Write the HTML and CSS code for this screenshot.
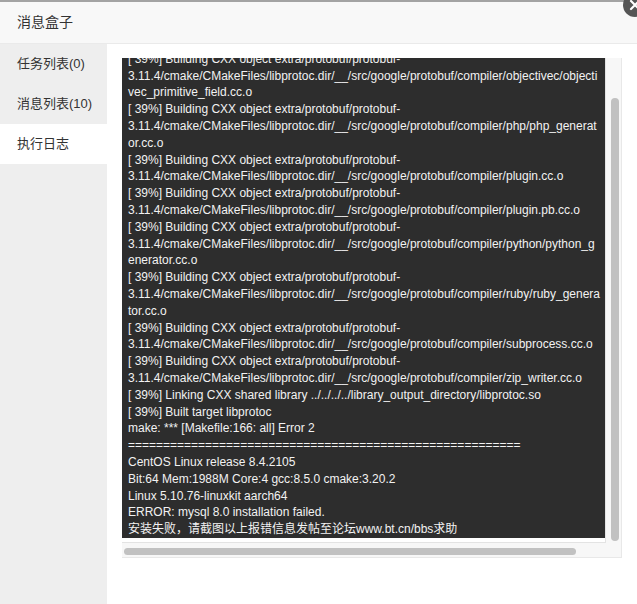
FILE: index.html
```html
<!DOCTYPE html>
<html lang="zh-CN">
<head>
    <meta charset="UTF-8">
    <meta name="viewport" content="width=device-width, initial-scale=1.0">
    <title>消息盒子</title>
    <link rel="stylesheet" href="styles.css">
</head>
<body>
    <div class="dialog">
        <div class="header">
            <span class="title">消息盒子</span>
            <a class="close-btn" href="#">
                <svg width="24" height="24" viewBox="0 0 24 24">
                    <circle cx="12" cy="12" r="12" fill="#555"/>
                    <path d="M8 8 L16 16 M16 8 L8 16" stroke="#fff" stroke-width="2.2" stroke-linecap="round"/>
                </svg>
            </a>
        </div>

        <div class="main">
            <div class="sidebar">
                <div class="tab">任务列表(0)</div>
                <div class="tab">消息列表(10)</div>
                <div class="tab active">执行日志</div>
            </div>

            <div class="content">
                <div class="log-box">
                    <div class="log-view">
<pre class="log-pre">[ 39%] Building CXX object extra/protobuf/protobuf-
3.11.4/cmake/CMakeFiles/libprotoc.dir/__/src/google/protobuf/compiler/objectivec/objecti
vec_primitive_field.cc.o
[ 39%] Building CXX object extra/protobuf/protobuf-
3.11.4/cmake/CMakeFiles/libprotoc.dir/__/src/google/protobuf/compiler/php/php_generat
or.cc.o
[ 39%] Building CXX object extra/protobuf/protobuf-
3.11.4/cmake/CMakeFiles/libprotoc.dir/__/src/google/protobuf/compiler/plugin.cc.o
[ 39%] Building CXX object extra/protobuf/protobuf-
3.11.4/cmake/CMakeFiles/libprotoc.dir/__/src/google/protobuf/compiler/plugin.pb.cc.o
[ 39%] Building CXX object extra/protobuf/protobuf-
3.11.4/cmake/CMakeFiles/libprotoc.dir/__/src/google/protobuf/compiler/python/python_g
enerator.cc.o
[ 39%] Building CXX object extra/protobuf/protobuf-
3.11.4/cmake/CMakeFiles/libprotoc.dir/__/src/google/protobuf/compiler/ruby/ruby_genera
tor.cc.o
[ 39%] Building CXX object extra/protobuf/protobuf-
3.11.4/cmake/CMakeFiles/libprotoc.dir/__/src/google/protobuf/compiler/subprocess.cc.o
[ 39%] Building CXX object extra/protobuf/protobuf-
3.11.4/cmake/CMakeFiles/libprotoc.dir/__/src/google/protobuf/compiler/zip_writer.cc.o
[ 39%] Linking CXX shared library ../../../../library_output_directory/libprotoc.so
[ 39%] Built target libprotoc
make: *** [Makefile:166: all] Error 2
========================================================
CentOS Linux release 8.4.2105
Bit:64 Mem:1988M Core:4 gcc:8.5.0 cmake:3.20.2
Linux 5.10.76-linuxkit aarch64
ERROR: mysql 8.0 installation failed.
安装失败，请截图以上报错信息发帖至论坛www.bt.cn/bbs求助</pre>
                    </div>
                    <div class="vtrack"><div class="vthumb"></div></div>
                    <div class="htrack"><div class="hthumb"></div></div>
                    <div class="corner"></div>
                </div>
            </div>
        </div>
    </div>
</body>
</html>
```

FILE: styles.css
```css
body {
    margin: 0;
    font-family: "Liberation Sans", Arial, "Noto Sans CJK SC", sans-serif;
    color: #333;
    background-color: #fff;
}
.dialog {
    height: 100vh;
    display: flex;
    flex-direction: column;
    border-top: 2px solid #a3a3a3;
    box-sizing: border-box;
    position: relative;
}
.header {
    height: 41px;
    line-height: 40px;
    padding-left: 17px;
    background-color: #f8f8f8;
    border-bottom: 1px solid #eaeaea;
    flex-shrink: 0;
}
.title {
    font-size: 14px;
    color: #333;
}
.close-btn {
    position: absolute;
    top: -9px;
    right: -10px;
    width: 24px;
    height: 24px;
    line-height: 0;
}
.main {
    flex: 1;
    display: flex;
}
.sidebar {
    width: 107px;
    background-color: #eeeeee;
    flex-shrink: 0;
}
.tab {
    height: 40px;
    line-height: 40px;
    padding-left: 17px;
    font-size: 13px;
    color: #333;
}
.tab.active {
    background-color: #fff;
}
.content {
    flex: 1;
    padding: 14px 15px 15px 15px;
}
.log-box {
    display: grid;
    grid-template-columns: 484px 16px;
    grid-template-rows: 485px 15px;
    width: 500px;
    height: 500px;
}
.log-view {
    overflow: hidden;
    background-color: #fff;
    border-right: 1px solid #e3e3e3;
    border-bottom: 1px solid #e3e3e3;
    padding-bottom: 4px;
    box-sizing: border-box;
    display: flex;
}
.log-pre {
    margin: 0;
    flex: 1;
    background-color: #2d2d2d;
    color: #f2f2f2;
    font-family: "Liberation Sans", Arial, "Noto Sans CJK SC", sans-serif;
    font-size: 12px;
    line-height: 16.8px;
    padding: 0 6px;
    white-space: pre;
    overflow: hidden;
    display: flex;
    flex-direction: column;
    justify-content: flex-end;
}
.vtrack {
    background-color: #f7f7f7;
    border-right: 1px solid #e8e8e8;
    box-sizing: border-box;
    padding: 40px 0 0 5px;
}
.vthumb {
    width: 8px;
    height: 443px;
    border-radius: 4px;
    background-color: #c1c1c1;
}
.htrack {
    background-color: #f7f7f7;
    border-bottom: 1px solid #e8e8e8;
    box-sizing: border-box;
    padding: 5px 0 0 2px;
}
.hthumb {
    width: 452px;
    height: 7px;
    border-radius: 4px;
    background-color: #c1c1c1;
}
.corner {
    background-color: #f7f7f7;
    border-right: 1px solid #e8e8e8;
    border-bottom: 1px solid #e8e8e8;
}
```
